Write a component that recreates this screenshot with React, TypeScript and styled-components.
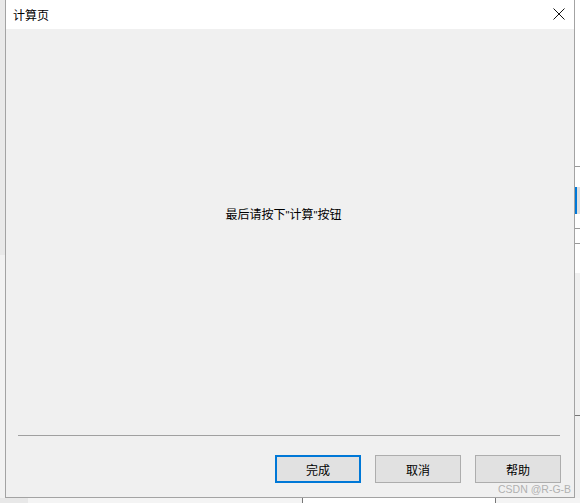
import React from "react";
import styled, { createGlobalStyle } from "styled-components";

const GlobalStyle = createGlobalStyle`
  html, body {
    margin: 0;
    padding: 0;
    background: #f3f3f3;
    overflow: hidden;
  }
  body {
    font-family: "Noto Sans CJK SC", "Noto Sans", "Liberation Sans", sans-serif;
  }
`;

const Screen = styled.div`
  position: relative;
  width: 580px;
  height: 503px;
  display: flex;
  flex-direction: column;
  background: #f3f3f3;
  overflow: hidden;
`;

const Row = styled.div`
  display: flex;
  height: 498px;
`;

const LeftStrip = styled.div`
  width: 5px;
  display: flex;
  flex-direction: column;
`;

const StripBlock = styled.div<{ $h: number; $bg: string; $line?: string; $focus?: boolean }>`
  height: ${({ $h }) => $h}px;
  background: ${({ $bg }) => $bg};
  border-top: ${({ $line }) => ($line ? `1px solid ${$line}` : "none")};
  border-left: ${({ $focus }) => ($focus ? "2px solid #0078d7" : "none")};
  box-sizing: border-box;
`;

const RightStrip = styled.div`
  width: 5px;
  display: flex;
  flex-direction: column;
`;

const Dialog = styled.div`
  width: 570px;
  box-sizing: border-box;
  border: 1px solid #a3a3a3;
  border-top: none;
  background: #f0f0f0;
  display: flex;
  flex-direction: column;
`;

const TitleBar = styled.div`
  height: 29px;
  background: #ffffff;
  display: flex;
  align-items: center;
  justify-content: space-between;
  padding: 0 9px 0 7px;
`;

const Title = styled.span`
  font-size: 12px;
  color: #000;
  padding-bottom: 1px;
`;

const CloseBtn = styled.div`
  width: 12px;
  height: 12px;
  display: flex;
  margin-bottom: 2px;
`;

const Content = styled.div`
  flex: 1;
  display: flex;
  align-items: center;
  justify-content: center;
  padding: 0 13px 38px 0;
`;

const Message = styled.span`
  font-size: 12px;
  color: #000;
`;

const Quote = styled.span`
  font-family: "Liberation Sans", Arial, sans-serif;
  font-size: 11px;
`;

const Footer = styled.div`
  display: flex;
  flex-direction: column;
  padding: 0 13px 14px 12px;
`;

const Separator = styled.div`
  height: 1px;
  background: #a0a0a0;
  margin-right: 1px;
`;

const ButtonRow = styled.div`
  display: flex;
  justify-content: flex-end;
  gap: 14px;
  margin-top: 19px;
`;

const Button = styled.button<{ $primary?: boolean }>`
  width: 86px;
  height: 28px;
  box-sizing: border-box;
  background: #e1e1e1;
  border: ${({ $primary }) => ($primary ? "2px solid #0078d7" : "1px solid #adadad")};
  font-family: "Noto Sans CJK SC", "Noto Sans", sans-serif;
  font-size: 12px;
  color: #000;
  padding: 0;
  display: flex;
  align-items: center;
  justify-content: center;
`;

const BottomStrip = styled.div`
  height: 5px;
  display: flex;
`;

const BottomBlock = styled.div<{ $w: number; $bg: string; $line?: boolean }>`
  width: ${({ $w }) => $w}px;
  background: ${({ $bg }) => $bg};
  border-left: ${({ $line }) => ($line ? "1px solid #777" : "none")};
  box-sizing: border-box;
`;

const Watermark = styled.span`
  position: absolute;
  left: 498px;
  top: 483px;
  font-family: "Liberation Sans", Arial, sans-serif;
  font-size: 10.5px;
  color: #b0b0b0;
`;

export default function App() {
  return (
    <Screen>
      <GlobalStyle />
      <Row>
        <LeftStrip>
          <StripBlock $h={255} $bg="#e9e9e9" />
          <StripBlock $h={243} $bg="#f2f2f2" />
        </LeftStrip>
        <Dialog>
          <TitleBar>
            <Title>计算页</Title>
            <CloseBtn>
              <svg width="12" height="12" viewBox="0 0 12 12">
                <path d="M0.5 0.5 L11.5 11.5 M11.5 0.5 L0.5 11.5" stroke="#111" strokeWidth="1" fill="none" />
              </svg>
            </CloseBtn>
          </TitleBar>
          <Content>
            <Message>
              最后请按下<Quote>"</Quote>计算<Quote>"</Quote>按钮
            </Message>
          </Content>
          <Footer>
            <Separator />
            <ButtonRow>
              <Button $primary>完成</Button>
              <Button>取消</Button>
              <Button>帮助</Button>
            </ButtonRow>
          </Footer>
        </Dialog>
        <RightStrip>
          <StripBlock $h={166} $bg="#ffffff" />
          <StripBlock $h={21} $bg="#ffffff" $line="#9a9a9a" />
          <StripBlock $h={27} $bg="#e1e1e1" $focus />
          <StripBlock $h={14} $bg="#ffffff" />
          <StripBlock $h={15} $bg="#ffffff" $line="#9a9a9a" />
          <StripBlock $h={30} $bg="#ffffff" $line="#9a9a9a" />
          <StripBlock $h={142} $bg="#f0f0f0" />
          <StripBlock $h={83} $bg="#f0f0f0" $line="#777" />
        </RightStrip>
      </Row>
      <BottomStrip>
        <BottomBlock $w={28} $bg="#e8e8e8" />
        <BottomBlock $w={274} $bg="#f4f4f4" />
        <BottomBlock $w={193} $bg="#ffffff" $line />
        <BottomBlock $w={85} $bg="#f4f4f4" $line />
      </BottomStrip>
      <Watermark>CSDN @R-G-B</Watermark>
    </Screen>
  );
}
